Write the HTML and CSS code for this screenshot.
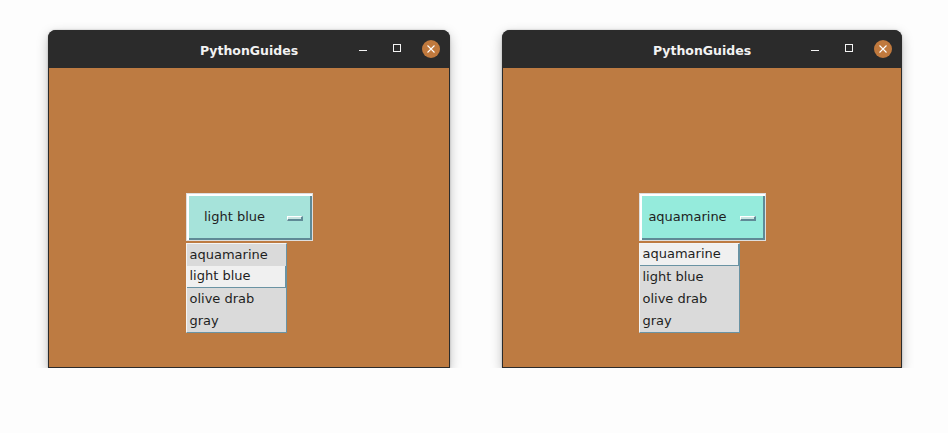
FILE: index.html
```html
<!DOCTYPE html>
<html>
<head>
<meta charset="utf-8">
<link rel="stylesheet" href="styles.css">
</head>
<body>
<div class="desktop">
  <div class="window">
    <div class="titlebar">
      <span class="title">PythonGuides</span>
      <div class="controls">
        <span class="ctl min"></span>
        <span class="ctl max"></span>
        <span class="ctl close">
          <svg width="18" height="18" viewBox="0 0 18 18"><path d="M5.5 5.5 L12.5 12.5 M12.5 5.5 L5.5 12.5" stroke="#fff" stroke-width="1.1" fill="none"/></svg>
        </span>
      </div>
    </div>
    <div class="content">
      <div class="option">
        <div class="menubutton mb-lightblue">
          <span class="mb-text">light blue</span>
          <span class="indicator"></span>
        </div>
        <ul class="menu">
          <li class="item">aquamarine</li>
          <li class="item active">light blue</li>
          <li class="item">olive drab</li>
          <li class="item">gray</li>
        </ul>
      </div>
    </div>
  </div>
  <div class="window second">
    <div class="titlebar">
      <span class="title">PythonGuides</span>
      <div class="controls">
        <span class="ctl min"></span>
        <span class="ctl max"></span>
        <span class="ctl close">
          <svg width="18" height="18" viewBox="0 0 18 18"><path d="M5.5 5.5 L12.5 12.5 M12.5 5.5 L5.5 12.5" stroke="#fff" stroke-width="1.1" fill="none"/></svg>
        </span>
      </div>
    </div>
    <div class="content">
      <div class="option">
        <div class="menubutton mb-aqua">
          <span class="mb-text">aquamarine</span>
          <span class="indicator"></span>
        </div>
        <ul class="menu">
          <li class="item active">aquamarine</li>
          <li class="item">light blue</li>
          <li class="item">olive drab</li>
          <li class="item">gray</li>
        </ul>
      </div>
    </div>
  </div>
</div>
</body>
</html>
```

FILE: styles.css
```css
html, body {
  margin: 0;
  padding: 0;
  background: #fdfdfd;
}
.desktop {
  display: flex;
  gap: 52px;
  padding: 30px 0 0 48px;
}
.window {
  width: 402px;
  height: 338px;
  display: flex;
  flex-direction: column;
  border-radius: 8px 8px 0 0;
  background: #2b2b2b;
  box-shadow: 0 4px 12px rgba(0, 0, 0, 0.25), 0 0 2px rgba(0,0,0,0.25);
  overflow: hidden;
}
.window.second {
  width: 400px;
}
.titlebar {
  height: 38px;
  flex: none;
  display: flex;
  align-items: center;
  justify-content: center;
  position: relative;
  background: #2b2b2b;
}
.title {
  font-family: "DejaVu Sans", sans-serif;
  font-weight: bold;
  font-size: 12.5px;
  color: #f2f2f2;
  margin-top: 2px;
}
.controls {
  position: absolute;
  right: 10px;
  top: 10px;
  display: flex;
  align-items: center;
}
.ctl {
  display: block;
}
.min {
  width: 8px;
  height: 1.5px;
  background: #f4f4f4;
  margin-top: 3px;
  margin-right: 26px;
}
.max {
  width: 6px;
  height: 6px;
  border: 1.3px solid #f4f4f4;
  margin-top: -2px;
  margin-right: 21px;
}
.close {
  width: 18px;
  height: 18px;
  border-radius: 50%;
  background: #c0793d;
}
.close svg {
  display: block;
}
.content {
  flex: 1;
  margin: 0 1px 1px 1px;
  background: #bd7b42;
  display: flex;
  justify-content: center;
  padding-top: 125px;
}
.option {
  position: relative;
  width: 127px;
  height: 48px;
}
.menubutton {
  box-sizing: border-box;
  width: 127px;
  height: 48px;
  border: 1px solid #dedede;
  display: flex;
  align-items: center;
  font-family: "DejaVu Sans", sans-serif;
  font-size: 13px;
  color: #1e1e1e;
  box-shadow: inset 2px 2px 0 #ffffff, inset -2px -2px 0 #5f8a96;
}
.mb-lightblue {
  background: #a6e3da;
}
.mb-aqua {
  background: #95ebdc;
}
.mb-text {
  width: 98px;
  text-align: center;
  margin-left: -1px;
  padding-bottom: 2px;
}
.indicator {
  box-sizing: border-box;
  width: 16px;
  height: 5px;
  margin-left: 3px;
  margin-top: 3px;
  border-top: 1px solid #ffffff;
  border-left: 1px solid #ffffff;
  border-right: 2px solid #5f8a96;
  border-bottom: 2px solid #5f8a96;
  background: #c8e6e2;
}
.menu {
  position: absolute;
  left: 0;
  top: 50px;
  width: 101px;
  box-sizing: border-box;
  margin: 0;
  padding: 0;
  list-style: none;
  background: #dadada;
  border: 1px solid;
  border-color: #f4f4f4 #6a93a3 #6a93a3 #f4f4f4;
  font-family: "DejaVu Sans", sans-serif;
  font-size: 13px;
  color: #1e1e1e;
}
.item {
  height: 22px;
  line-height: 21px;
  padding-left: 3px;
  box-sizing: border-box;
}
.item.active {
  background: #f0f0f0;
  border-bottom: 1px solid #6a93a3;
  border-right: 1px solid #6a93a3;
  line-height: 20px;
}
```
